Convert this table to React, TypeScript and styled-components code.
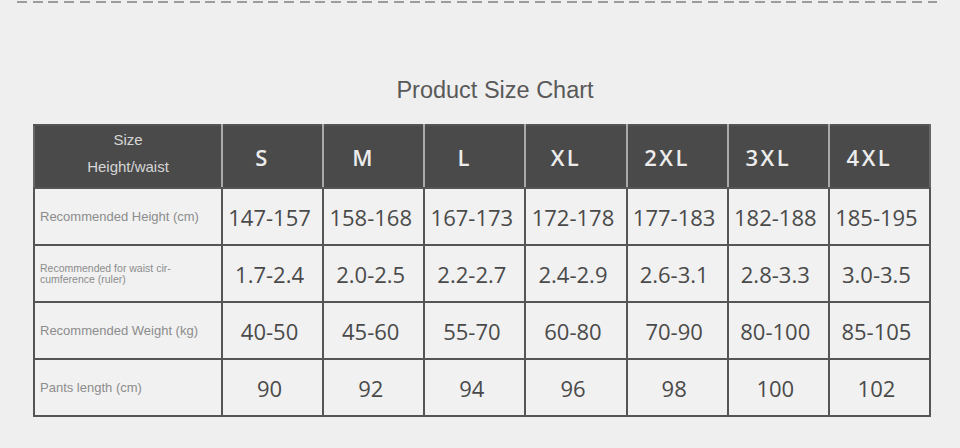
import styled, { createGlobalStyle } from "styled-components";

const GlobalStyle = createGlobalStyle`
  html, body {
    margin: 0;
    padding: 0;
    background: #efefef;
  }
  body {
    font-family: "Liberation Sans", Arial, sans-serif;
  }
`;

const Page = styled.div`
  width: 960px;
  height: 448px;
  overflow: hidden;
  background: #efefef;
  padding-top: 1px;
  box-sizing: border-box;
`;

const Dashes = styled.div`
  margin-left: 17px;
  width: 920px;
  height: 2px;
  background: repeating-linear-gradient(
    90deg,
    #9c9c9c 0 10px,
    transparent 10px 15.7px
  );
`;

const Title = styled.h2`
  margin: 0;
  padding: 73px 0 0 30px;
  text-align: center;
  font-family: "Liberation Sans", Arial, sans-serif;
  font-weight: 400;
  font-size: 23.5px;
  line-height: 28px;
  color: #595959;
`;

const TableWrap = styled.div`
  padding: 20px 0 0 33px;
`;

const Table = styled.table`
  width: 898px;
  table-layout: fixed;
  border-collapse: collapse;
  border: 2px solid #666;
`;

const HeadCell = styled.th`
  height: 59px;
  padding: 0 20px 0 0;
  background: #4a4a4a;
  border: 2px solid #555;
  border-left-color: #aaa;
  border-right-color: #aaa;
  font-family: "Open Sans", sans-serif;
  font-weight: 600;
  font-size: 22px;
  line-height: 28px;
  letter-spacing: 2.5px;
  color: #ececec;
  text-align: center;
  &:last-child {
    border-right-color: #666;
  }
`;

const CornerCell = styled(HeadCell)`
  height: 54px;
  padding: 0 0 7px 0;
  border-left-color: #666;
  font-family: "Liberation Sans", Arial, sans-serif;
  font-weight: 400;
  font-size: 15px;
  letter-spacing: 0;
  color: #d6d6d6;
  span {
    display: block;
    line-height: 27px;
  }
`;

const LabelCell = styled.td<{ $small?: boolean }>`
  height: 55px;
  padding: 0 0 0 5px;
  background: #f1f1f1;
  border: 2px solid #555;
  font-family: "Liberation Sans", Arial, sans-serif;
  font-size: ${(p) => (p.$small ? "10.5px" : "13px")};
  line-height: ${(p) => (p.$small ? "11px" : "16px")};
  color: #8c8c8c;
  vertical-align: middle;
`;

const ValueCell = styled.td`
  height: 55px;
  padding: 0 6px 0 0;
  background: #f1f1f1;
  border: 2px solid #555;
  font-family: "Open Sans", sans-serif;
  font-size: 22px;
  line-height: 30px;
  color: #4a4a4a;
  text-align: center;
  vertical-align: middle;
`;

const sizes = ["S", "M", "L", "XL", "2XL", "3XL", "4XL"];

const rows: { label: React.ReactNode; small?: boolean; values: string[] }[] = [
  {
    label: "Recommended Height (cm)",
    values: ["147-157", "158-168", "167-173", "172-178", "177-183", "182-188", "185-195"],
  },
  {
    label: (
      <>
        Recommended for waist cir-
        <br />
        cumference (ruler)
      </>
    ),
    small: true,
    values: ["1.7-2.4", "2.0-2.5", "2.2-2.7", "2.4-2.9", "2.6-3.1", "2.8-3.3", "3.0-3.5"],
  },
  {
    label: "Recommended Weight (kg)",
    values: ["40-50", "45-60", "55-70", "60-80", "70-90", "80-100", "85-105"],
  },
  {
    label: "Pants length (cm)",
    values: ["90", "92", "94", "96", "98", "100", "102"],
  },
];

export default function App() {
  return (
    <>
      <GlobalStyle />
      <Page>
        <Dashes />
        <Title>Product Size Chart</Title>
        <TableWrap>
          <Table>
            <colgroup>
              <col style={{ width: 188 }} />
              {sizes.map((s) => (
                <col key={s} />
              ))}
            </colgroup>
            <thead>
              <tr>
                <CornerCell>
                  <span>Size</span>
                  <span>Height/waist</span>
                </CornerCell>
                {sizes.map((s) => (
                  <HeadCell key={s}>{s}</HeadCell>
                ))}
              </tr>
            </thead>
            <tbody>
              {rows.map((r, i) => (
                <tr key={i}>
                  <LabelCell $small={r.small}>{r.label}</LabelCell>
                  {r.values.map((v, j) => (
                    <ValueCell key={j}>{v}</ValueCell>
                  ))}
                </tr>
              ))}
            </tbody>
          </Table>
        </TableWrap>
      </Page>
    </>
  );
}
